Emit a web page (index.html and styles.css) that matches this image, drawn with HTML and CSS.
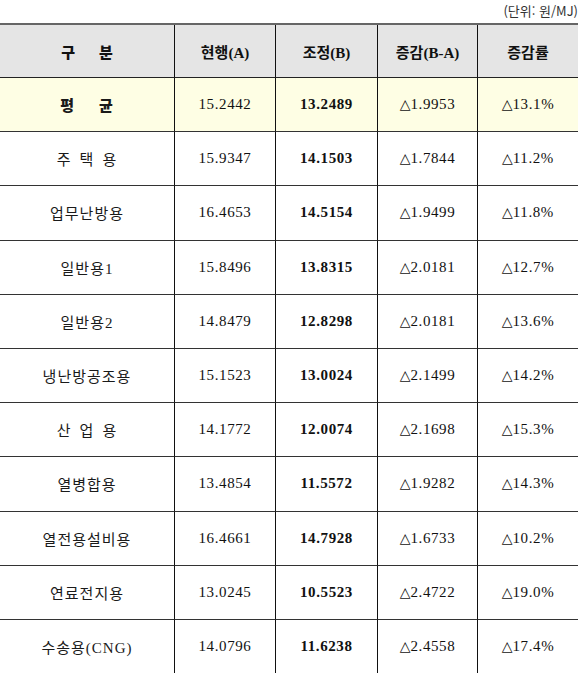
FILE: index.html
```html
<!DOCTYPE html>
<html lang="ko">
<head>
<meta charset="utf-8">
<title>가스요금 조정</title>
<link rel="stylesheet" href="styles.css">
</head>
<body>
<div class="unit">(단위: 원/MJ)</div>
<table class="rates">
  <colgroup>
    <col class="c-name">
    <col class="c-a">
    <col class="c-b">
    <col class="c-d">
    <col class="c-r">
  </colgroup>
  <thead>
    <tr>
      <th class="name"><span class="wide">구</span><span class="wide">분</span></th>
      <th>현행(A)</th>
      <th>조정(B)</th>
      <th>증감(B-A)</th>
      <th>증감률</th>
    </tr>
  </thead>
  <tbody>
    <tr class="avg">
      <td class="name bold"><span class="wide">평</span><span class="wide">균</span></td>
      <td>15.2442</td>
      <td class="b">13.2489</td>
      <td><span class="tri">△</span>1.9953</td>
      <td><span class="tri">△</span>13.1%</td>
    </tr>
    <tr>
      <td class="name"><span class="sp">주</span><span class="sp">택</span><span class="sp">용</span></td>
      <td>15.9347</td>
      <td class="b">14.1503</td>
      <td><span class="tri">△</span>1.7844</td>
      <td><span class="tri">△</span>11.2%</td>
    </tr>
    <tr>
      <td class="name">업무난방용</td>
      <td>16.4653</td>
      <td class="b">14.5154</td>
      <td><span class="tri">△</span>1.9499</td>
      <td><span class="tri">△</span>11.8%</td>
    </tr>
    <tr>
      <td class="name">일반용1</td>
      <td>15.8496</td>
      <td class="b">13.8315</td>
      <td><span class="tri">△</span>2.0181</td>
      <td><span class="tri">△</span>12.7%</td>
    </tr>
    <tr>
      <td class="name">일반용2</td>
      <td>14.8479</td>
      <td class="b">12.8298</td>
      <td><span class="tri">△</span>2.0181</td>
      <td><span class="tri">△</span>13.6%</td>
    </tr>
    <tr>
      <td class="name">냉난방공조용</td>
      <td>15.1523</td>
      <td class="b">13.0024</td>
      <td><span class="tri">△</span>2.1499</td>
      <td><span class="tri">△</span>14.2%</td>
    </tr>
    <tr>
      <td class="name"><span class="sp">산</span><span class="sp">업</span><span class="sp">용</span></td>
      <td>14.1772</td>
      <td class="b">12.0074</td>
      <td><span class="tri">△</span>2.1698</td>
      <td><span class="tri">△</span>15.3%</td>
    </tr>
    <tr>
      <td class="name">열병합용</td>
      <td>13.4854</td>
      <td class="b">11.5572</td>
      <td><span class="tri">△</span>1.9282</td>
      <td><span class="tri">△</span>14.3%</td>
    </tr>
    <tr>
      <td class="name">열전용설비용</td>
      <td>16.4661</td>
      <td class="b">14.7928</td>
      <td><span class="tri">△</span>1.6733</td>
      <td><span class="tri">△</span>10.2%</td>
    </tr>
    <tr>
      <td class="name">연료전지용</td>
      <td>13.0245</td>
      <td class="b">10.5523</td>
      <td><span class="tri">△</span>2.4722</td>
      <td><span class="tri">△</span>19.0%</td>
    </tr>
    <tr>
      <td class="name">수송용(CNG)</td>
      <td>14.0796</td>
      <td class="b">11.6238</td>
      <td><span class="tri">△</span>2.4558</td>
      <td><span class="tri">△</span>17.4%</td>
    </tr>
  </tbody>
</table>
</body>
</html>
```

FILE: styles.css
```css
html, body {
  margin: 0;
  padding: 0;
  background: #ffffff;
}

body {
  width: 578px;
  overflow: hidden;
  font-family: "Liberation Serif", "Noto Sans CJK KR", serif;
  color: #111111;
}

.unit {
  height: 23px;
  box-sizing: border-box;
  padding-top: 2px;
  text-align: right;
  font-family: "Noto Sans CJK KR", sans-serif;
  font-size: 13px;
  line-height: 17px;
  color: #333333;
  padding-right: 0;
}

.rates {
  width: 578px;
  table-layout: fixed;
  border-collapse: separate;
  border-spacing: 0;
  border-top: 2px solid #666666;
}

.c-name { width: 174px; }
.c-a { width: 101px; }
.c-b { width: 102px; }
.c-d { width: 100px; }
.c-r { width: 101px; }

.rates th,
.rates td {
  padding: 0;
  text-align: center;
  vertical-align: middle;
  border-bottom: 1px solid #333333;
  border-left: 1px solid #111111;
  font-size: 15px;
  letter-spacing: 0.6px;
  box-sizing: border-box;
}

.rates th.name,
.rates td.name {
  border-left: none;
}

.rates thead tr {
  height: 53px;
}

.rates tbody tr {
  height: 54.2px;
}

.rates th {
  background: #e5e5e5;
  font-weight: 700;
  font-size: 15px;
  letter-spacing: 0;
  border-bottom: 1px solid #222222;
}

.rates tbody tr.avg td {
  background: #fefee4;
}

td.name {
  font-family: "Liberation Serif", "Noto Sans CJK KR", serif;
  font-size: 15px;
  font-weight: 400;
  letter-spacing: 1px;
  color: #1a1a1a;
}

td.name.bold {
  font-family: "Noto Sans CJK KR", sans-serif;
  font-weight: 900;
}

.wide {
  display: inline-block;
  margin: 0 12px;
}

th.name .wide {
  font-family: "Noto Sans CJK KR", sans-serif;
  font-weight: 900;
}

.sp {
  display: inline-block;
  margin: 0 4px;
}

td.b {
  font-weight: 700;
}

.tri {
  font-family: "DejaVu Sans", sans-serif;
  font-size: 14px;
  letter-spacing: 0;
}
```
